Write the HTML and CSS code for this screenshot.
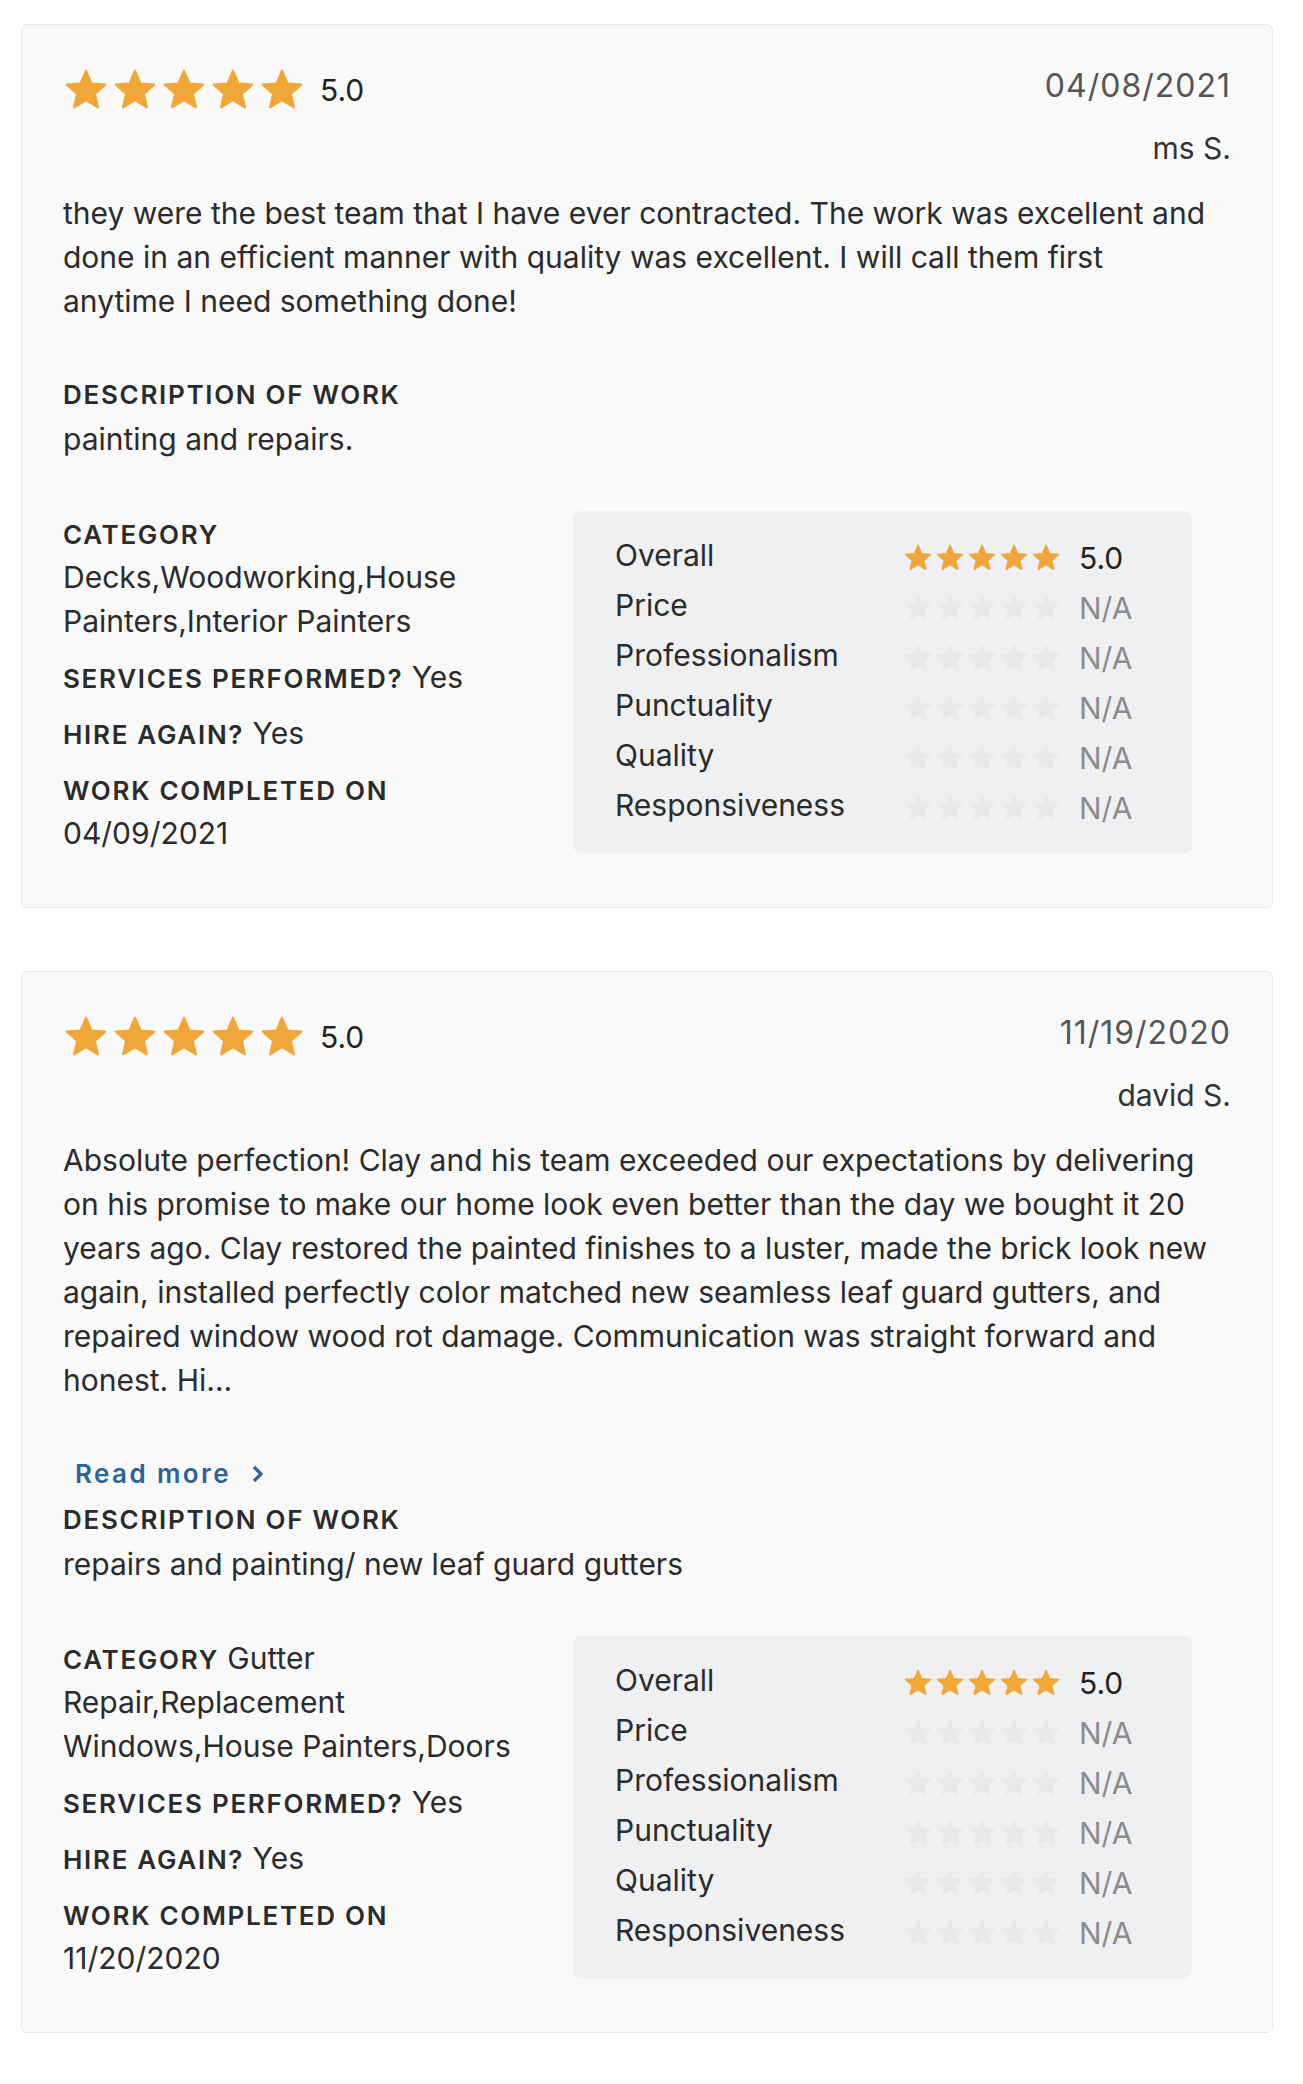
FILE: index.html
```html
<!DOCTYPE html>
<html lang="en">
<head>
    <meta charset="UTF-8">
    <meta name="viewport" content="width=device-width, initial-scale=1.0">
    <title>Reviews</title>
    <link rel="stylesheet" href="styles.css">
</head>
<body>
    <svg class="sprite" xmlns="http://www.w3.org/2000/svg">
        <symbol id="star" viewBox="0 0 24 24">
            <path d="M12 17.27L18.18 21l-1.64-7.03L22 9.24l-7.19-.61L12 2 9.19 8.63 2 9.24l5.46 4.73L5.82 21z"
                  fill="currentColor" stroke="currentColor" stroke-width="1.2" stroke-linejoin="round"/>
        </symbol>
    </svg>

    <main class="reviews">
        <!-- review 1 -->
        <article class="review-card">
            <header class="review-head">
                <div class="review-score">
                    <div class="stars stars-lg filled">
                        <svg><use href="#star"/></svg><svg><use href="#star"/></svg><svg><use href="#star"/></svg><svg><use href="#star"/></svg><svg><use href="#star"/></svg>
                    </div>
                    <span class="score">5.0</span>
                </div>
                <div class="review-meta">
                    <div class="review-date">04/08/2021</div>
                    <div class="review-author">ms S.</div>
                </div>
            </header>

            <p class="review-text">they were the best team that I have ever contracted. The work was excellent and done in an efficient manner with quality was excellent. I will call them first anytime I need something done!</p>

            <div class="review-desc">
                <div class="detail-label">DESCRIPTION OF WORK</div>
                <div>painting and repairs.</div>
            </div>

            <div class="review-details">
                <div class="detail-list">
                    <p class="detail"><span class="detail-label">CATEGORY</span> Decks,Woodworking,House Painters,Interior Painters</p>
                    <p class="detail"><span class="detail-label">SERVICES PERFORMED?</span> Yes</p>
                    <p class="detail"><span class="detail-label">HIRE AGAIN?</span> Yes</p>
                    <p class="detail"><span class="detail-label">WORK COMPLETED ON</span> 04/09/2021</p>
                </div>

                <div class="rating-box">
                    <div class="rating-row">
                        <span class="rating-name">Overall</span>
                        <span class="stars stars-sm filled"><svg><use href="#star"/></svg><svg><use href="#star"/></svg><svg><use href="#star"/></svg><svg><use href="#star"/></svg><svg><use href="#star"/></svg></span>
                        <span class="rating-value">5.0</span>
                    </div>
                    <div class="rating-row">
                        <span class="rating-name">Price</span>
                        <span class="stars stars-sm"><svg><use href="#star"/></svg><svg><use href="#star"/></svg><svg><use href="#star"/></svg><svg><use href="#star"/></svg><svg><use href="#star"/></svg></span>
                        <span class="rating-value na">N/A</span>
                    </div>
                    <div class="rating-row">
                        <span class="rating-name">Professionalism</span>
                        <span class="stars stars-sm"><svg><use href="#star"/></svg><svg><use href="#star"/></svg><svg><use href="#star"/></svg><svg><use href="#star"/></svg><svg><use href="#star"/></svg></span>
                        <span class="rating-value na">N/A</span>
                    </div>
                    <div class="rating-row">
                        <span class="rating-name">Punctuality</span>
                        <span class="stars stars-sm"><svg><use href="#star"/></svg><svg><use href="#star"/></svg><svg><use href="#star"/></svg><svg><use href="#star"/></svg><svg><use href="#star"/></svg></span>
                        <span class="rating-value na">N/A</span>
                    </div>
                    <div class="rating-row">
                        <span class="rating-name">Quality</span>
                        <span class="stars stars-sm"><svg><use href="#star"/></svg><svg><use href="#star"/></svg><svg><use href="#star"/></svg><svg><use href="#star"/></svg><svg><use href="#star"/></svg></span>
                        <span class="rating-value na">N/A</span>
                    </div>
                    <div class="rating-row">
                        <span class="rating-name">Responsiveness</span>
                        <span class="stars stars-sm"><svg><use href="#star"/></svg><svg><use href="#star"/></svg><svg><use href="#star"/></svg><svg><use href="#star"/></svg><svg><use href="#star"/></svg></span>
                        <span class="rating-value na">N/A</span>
                    </div>
                </div>
            </div>
        </article>

        <!-- review 2 -->
        <article class="review-card">
            <header class="review-head">
                <div class="review-score">
                    <div class="stars stars-lg filled">
                        <svg><use href="#star"/></svg><svg><use href="#star"/></svg><svg><use href="#star"/></svg><svg><use href="#star"/></svg><svg><use href="#star"/></svg>
                    </div>
                    <span class="score">5.0</span>
                </div>
                <div class="review-meta">
                    <div class="review-date">11/19/2020</div>
                    <div class="review-author">david S.</div>
                </div>
            </header>

            <p class="review-text">Absolute perfection! Clay and his team exceeded our expectations by delivering on his promise to make our home look even better than the day we bought it 20 years ago. Clay restored the painted finishes to a luster, made the brick look new again, installed perfectly color matched new seamless leaf guard gutters, and repaired window wood rot damage. Communication was straight forward and honest. Hi...</p>

            <a class="read-more" href="#">Read more
                <svg viewBox="0 0 18 18"><path d="M5 2L12 9L5 16" fill="none" stroke="currentColor" stroke-width="3.2"/></svg>
            </a>

            <div class="review-desc">
                <div class="detail-label">DESCRIPTION OF WORK</div>
                <div>repairs and painting/ new leaf guard gutters</div>
            </div>

            <div class="review-details">
                <div class="detail-list">
                    <p class="detail"><span class="detail-label">CATEGORY</span> Gutter Repair,Replacement Windows,House Painters,Doors</p>
                    <p class="detail"><span class="detail-label">SERVICES PERFORMED?</span> Yes</p>
                    <p class="detail"><span class="detail-label">HIRE AGAIN?</span> Yes</p>
                    <p class="detail"><span class="detail-label">WORK COMPLETED ON</span> 11/20/2020</p>
                </div>

                <div class="rating-box">
                    <div class="rating-row">
                        <span class="rating-name">Overall</span>
                        <span class="stars stars-sm filled"><svg><use href="#star"/></svg><svg><use href="#star"/></svg><svg><use href="#star"/></svg><svg><use href="#star"/></svg><svg><use href="#star"/></svg></span>
                        <span class="rating-value">5.0</span>
                    </div>
                    <div class="rating-row">
                        <span class="rating-name">Price</span>
                        <span class="stars stars-sm"><svg><use href="#star"/></svg><svg><use href="#star"/></svg><svg><use href="#star"/></svg><svg><use href="#star"/></svg><svg><use href="#star"/></svg></span>
                        <span class="rating-value na">N/A</span>
                    </div>
                    <div class="rating-row">
                        <span class="rating-name">Professionalism</span>
                        <span class="stars stars-sm"><svg><use href="#star"/></svg><svg><use href="#star"/></svg><svg><use href="#star"/></svg><svg><use href="#star"/></svg><svg><use href="#star"/></svg></span>
                        <span class="rating-value na">N/A</span>
                    </div>
                    <div class="rating-row">
                        <span class="rating-name">Punctuality</span>
                        <span class="stars stars-sm"><svg><use href="#star"/></svg><svg><use href="#star"/></svg><svg><use href="#star"/></svg><svg><use href="#star"/></svg><svg><use href="#star"/></svg></span>
                        <span class="rating-value na">N/A</span>
                    </div>
                    <div class="rating-row">
                        <span class="rating-name">Quality</span>
                        <span class="stars stars-sm"><svg><use href="#star"/></svg><svg><use href="#star"/></svg><svg><use href="#star"/></svg><svg><use href="#star"/></svg><svg><use href="#star"/></svg></span>
                        <span class="rating-value na">N/A</span>
                    </div>
                    <div class="rating-row">
                        <span class="rating-name">Responsiveness</span>
                        <span class="stars stars-sm"><svg><use href="#star"/></svg><svg><use href="#star"/></svg><svg><use href="#star"/></svg><svg><use href="#star"/></svg><svg><use href="#star"/></svg></span>
                        <span class="rating-value na">N/A</span>
                    </div>
                </div>
            </div>
        </article>
    </main>
</body>
</html>
```
FILE: styles.css
```css
* {
    margin: 0;
    padding: 0;
    box-sizing: border-box;
}

body {
    font-family: 'Inter', 'Noto Sans', sans-serif;
    font-size: 30px;
    line-height: 44px;
    color: #2b2b2b;
    background: #fff;
}

.sprite {
    display: none;
}

.reviews {
    display: flex;
    flex-direction: column;
    gap: 63px;
    padding: 24px 30px 40px 21px;
}

.review-card {
    background: #f9f9f9;
    border: 1px solid #e9e9e9;
    border-radius: 6px;
    padding: 39px 41px 40px 41px;
}

/* header: stars + date/author */
.review-head {
    display: flex;
    justify-content: space-between;
    align-items: flex-start;
    margin-bottom: 21px;
}

.review-score {
    display: flex;
    align-items: center;
    height: 52px;
}

.stars {
    display: flex;
    color: #e8e9eb;
}

.stars.filled {
    color: #f1a638;
}

.stars-lg {
    gap: 3px;
}

.stars-lg svg {
    width: 46px;
    height: 46px;
}

.stars-sm {
    gap: 2px;
}

.stars-sm svg {
    width: 30px;
    height: 30px;
}

.score {
    margin-left: 15px;
    color: #222;
}

.review-meta {
    text-align: right;
}

.review-date {
    font-size: 32px;
    letter-spacing: 1px;
    color: #555;
}

.review-author {
    margin-top: 18px;
    color: #333;
}

.review-text {
    max-width: 1160px;
    margin-bottom: 50px;
}

.read-more {
    display: flex;
    align-items: center;
    width: fit-content;
    height: 44px;
    margin-left: 12px;
    font-size: 26px;
    font-weight: 600;
    letter-spacing: 2.4px;
    color: #2c6397;
    text-decoration: none;
}

.read-more svg {
    width: 18px;
    height: 18px;
    margin-left: 18px;
}

.read-more + .review-desc {
    margin-top: 2px;
}

.review-desc {
    margin-bottom: 50px;
}

.detail-label {
    font-size: 26px;
    font-weight: 600;
    letter-spacing: 1.7px;
    color: #2b2b2b;
}

.detail .detail-label {
    line-height: 1;
}

/* details + rating breakdown */
.review-details {
    display: grid;
    grid-template-columns: 460px 619px;
    column-gap: 50px;
    align-items: start;
}

.detail {
    margin-bottom: 12px;
}

.rating-box {
    background: #eff0f2;
    border-radius: 8px;
    padding: 19px 0 23px 42px;
}

.rating-row {
    display: flex;
    align-items: center;
    height: 50px;
}

.rating-name {
    width: 288px;
}

.rating-value {
    margin-left: 18px;
    margin-top: 6px;
    color: #222;
}

.rating-row .stars {
    margin-top: 6px;
}

.rating-value.na {
    color: #8c8c8c;
}
```
